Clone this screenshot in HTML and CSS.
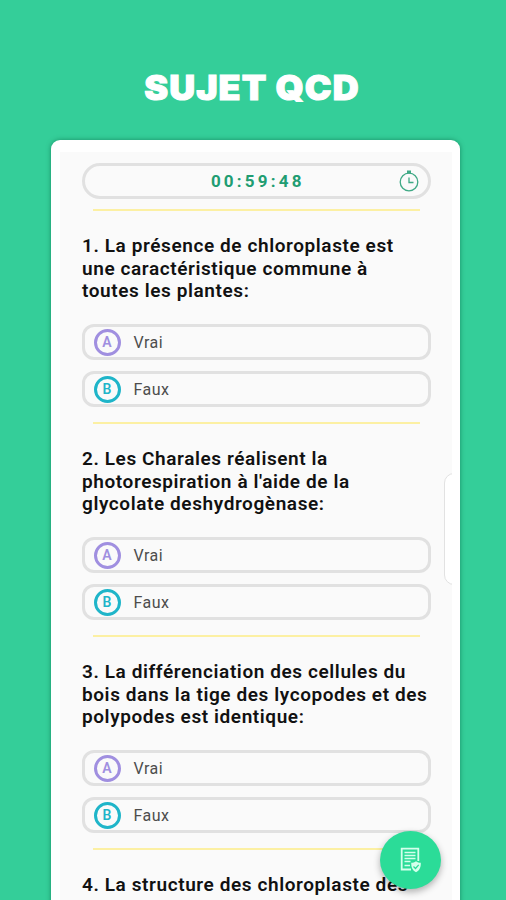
FILE: index.html
```
<!DOCTYPE html>
<html lang="fr">
<head>
  <meta charset="UTF-8">
  <meta name="viewport" content="width=device-width, initial-scale=1.0">
  <title>Sujet QCD</title>
  <link rel="stylesheet" href="styles.css">
</head>
<body>
  <h1>SUJET QCD</h1>

  <div class="phone">
    <main class="screen">
      <div class="timer">
        <span class="time">00:59:48</span>
        <svg class="clock" viewBox="0 0 20 22" fill="none" stroke="#3fa985">
          <circle cx="10" cy="12" r="8.8" stroke-width="1.3"/>
          <path d="M10 7.5V12.5H14.5" stroke-width="1.3"/>
          <path d="M8 1.8H12M10 1.5V3.5" stroke-width="2.6"/>
        </svg>
      </div>

      <section class="question">
        <h2>1. La présence de chloroplaste est<br>une caractéristique commune à<br>toutes les plantes:</h2>
        <div class="option"><span class="letter a">A</span>Vrai</div>
        <div class="option"><span class="letter b">B</span>Faux</div>
      </section>

      <section class="question">
        <h2>2. Les Charales réalisent la<br>photorespiration à l'aide de la<br>glycolate deshydrogènase:</h2>
        <div class="option"><span class="letter a">A</span>Vrai</div>
        <div class="option"><span class="letter b">B</span>Faux</div>
      </section>

      <section class="question">
        <h2>3. La différenciation des cellules du<br>bois dans la tige des lycopodes et des<br>polypodes est identique:</h2>
        <div class="option"><span class="letter a">A</span>Vrai</div>
        <div class="option"><span class="letter b">B</span>Faux</div>
      </section>

      <section class="question">
        <h2>4. La structure des chloroplaste des</h2>
      </section>

      <div class="edge-panel"></div>
    </main>

    <button class="fab" aria-label="Correction">
      <svg viewBox="0 0 22 26" fill="none" stroke="#d5ffec">
        <path d="M11 22.5H1.7V1.7H18.3V14" stroke-width="1.8"/>
        <path d="M4.5 5.5H15.5M4.5 8.5H15.5M4.5 11.5H15.5M4.5 14.5H10.5M4.5 18.5H10" stroke-width="1.5"/>
        <path d="M16 14.2C17.5 15.5 19 15.8 20.8 15.8C21 20.5 19.5 23.5 16 25.2C12.5 23.5 11 20.5 11.2 15.8C13 15.8 14.5 15.5 16 14.2Z" fill="#d5ffec" stroke="none"/>
        <path d="M13.5 19.5L15.5 21.5L18.7 17.8" stroke="#2bdc98" stroke-width="1.2"/>
      </svg>
    </button>
  </div>
</body>
</html>
```
FILE: styles.css
```
* {
  box-sizing: border-box;
}

body {
  margin: 0;
  height: 900px;
  padding-top: 68px;
  background: #34ce99;
  font-family: Roboto, sans-serif;
  overflow: hidden;
}

h1 {
  margin: 0 0 31.5px;
  height: 40px;
  line-height: 40px;
  font-family: Inter, sans-serif;
  font-size: 33.5px;
  font-weight: 900;
  letter-spacing: 1px;
  text-align: center;
  color: #fff;
  -webkit-text-stroke: 1px #fff;
  transform: translateX(-1px) scaleX(1.07);
}

.phone {
  position: relative;
  width: 409px;
  height: 790px;
  margin-left: 51px;
  padding: 12px 8px 0 9px;
  background: #fff;
  border-radius: 9px;
  box-shadow: 0 0 5px rgba(0, 90, 60, 0.55);
}

.screen {
  position: relative;
  height: 778px;
  padding: 11.5px 21.5px 0 22px;
  background: #fafafa;
  overflow: hidden;
}

.timer {
  display: flex;
  align-items: center;
  justify-content: center;
  position: relative;
  height: 36px;
  border: 3px solid #e1e1e1;
  border-radius: 18px;
}

.time {
  padding-left: 3px;
  font-size: 17px;
  font-weight: 700;
  letter-spacing: 3.2px;
  color: #219d72;
}

.clock {
  position: absolute;
  right: 9px;
  top: 4px;
  width: 20px;
  height: 22px;
}

.question {
  position: relative;
  height: 213px;
  padding-top: 36px;
}

/* yellow separator above each question */
.question::before {
  content: "";
  position: absolute;
  top: 10px;
  left: 11px;
  right: 11px;
  height: 2px;
  background: #fcf0a3;
}

h2 {
  margin: 0 0 21.5px;
  font-size: 19px;
  font-weight: 600;
  line-height: 22.5px;
  letter-spacing: 0.59px;
  white-space: nowrap;
  color: #111;
}

.option {
  display: flex;
  align-items: center;
  height: 36px;
  margin-bottom: 11px;
  padding-left: 8.5px;
  border: 3px solid #e1e1e1;
  border-radius: 12px;
  font-size: 16px;
  letter-spacing: 0.5px;
  color: #4d4d4d;
}

.letter {
  display: flex;
  align-items: center;
  justify-content: center;
  width: 27px;
  height: 27px;
  margin-right: 13px;
  border: 3px solid;
  border-radius: 50%;
  font-size: 14px;
  font-weight: 600;
  letter-spacing: 0;
}

.a {
  color: #a08fe0;
}

.b {
  color: #1fb5c9;
}

.edge-panel {
  position: absolute;
  top: 321px;
  right: -12px;
  width: 20px;
  height: 112px;
  border: 1.5px solid #e2e2e2;
  border-radius: 12px;
  background: #fff;
}

.fab {
  position: absolute;
  top: 691px;
  left: 329px;
  display: flex;
  align-items: center;
  justify-content: center;
  width: 61px;
  height: 58px;
  padding: 0;
  border: none;
  border-radius: 50%;
  background: #2bdc98;
  box-shadow: 0 3px 7px rgba(0, 0, 0, 0.3);
}

.fab svg {
  width: 22px;
  height: 26px;
}
```
